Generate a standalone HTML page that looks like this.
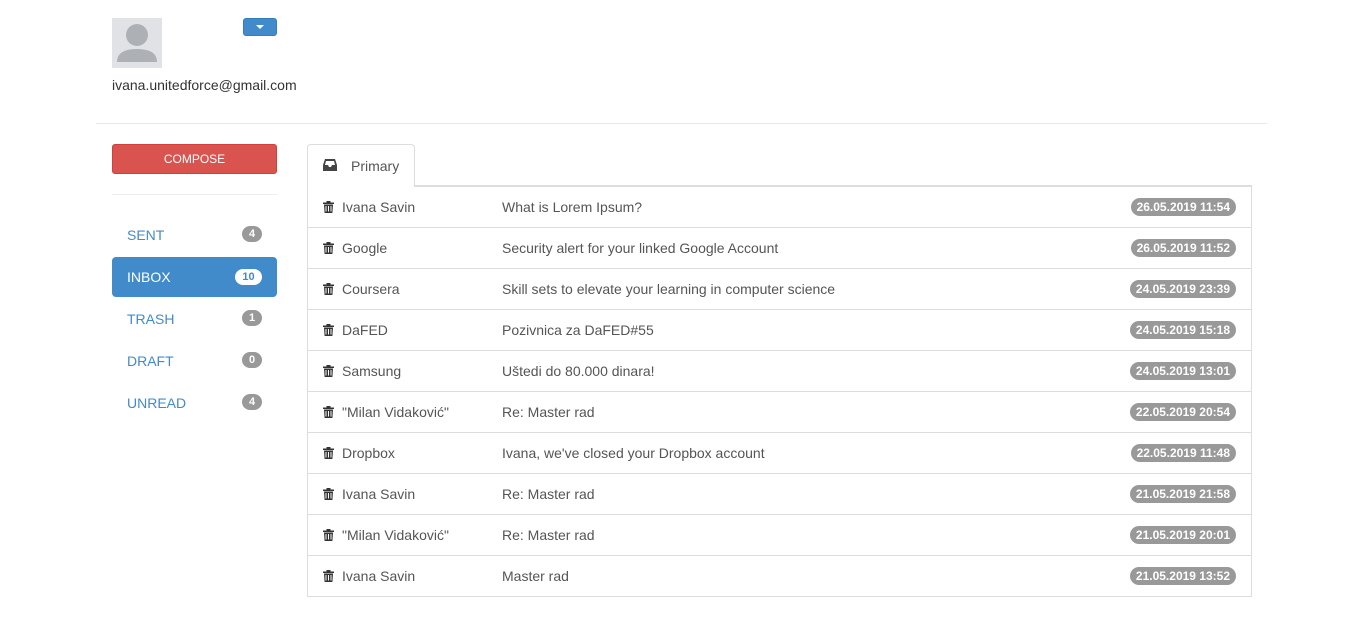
<!DOCTYPE html>
<html><head><meta charset="utf-8"><style>
*{box-sizing:border-box;margin:0;padding:0}
body{width:1363px;height:621px;background:#fff;font-family:"Liberation Sans",sans-serif;font-size:14px;color:#333;position:relative;overflow:hidden}
.abs{position:absolute}
.avatar{left:112px;top:18px;width:50px;height:50px;background:#e0e2e5;overflow:hidden}
.dd{left:243px;top:18px;width:34px;height:18px;background:#428bca;border:1px solid #357ebd;border-radius:3px}
.dd:after{content:"";position:absolute;left:12px;top:6px;border-left:4px solid transparent;border-right:4px solid transparent;border-top:4px solid #fff}
.hr{left:96px;top:123px;width:1171px;height:1px;background:#e8e8e8}
.compose{left:112px;top:144px;width:165px;height:30px;background:#d9534f;border:1px solid #d43f3a;border-radius:3px;color:#fff;font-size:12px;text-align:center;line-height:28px}
.hr2{left:112px;top:194px;width:165px;height:1px;background:#eee}
.nav{left:112px;width:165px;height:40px;line-height:42px;padding-left:15px;color:#428bca;font-size:14px;border-radius:4px}
.nav .b{position:absolute;right:15px;top:12px;height:16px;min-width:20px;padding:0 6px;border-radius:8px;background:#999;color:#fff;font-size:11px;font-weight:bold;line-height:16px;text-align:center}
.nav.act{background:#428bca;color:#fff;line-height:40px}
.nav.act .b{background:#fff;color:#428bca;min-width:27px}
.tab{left:307px;top:144px;width:108px;height:43px;border:1px solid #ddd;border-bottom:none;border-radius:4px 4px 0 0;background:#fff;padding:13px 0 0 43px;color:#555;z-index:2}
.tabline{left:307px;top:185px;width:945px;height:2px;background:#ddd}
.tbl{left:307px;top:186px;width:945px;border:1px solid #ddd;border-top:none}
.row{height:41px;border-top:1px solid #ddd;position:relative;color:#555}
.row:first-child{border-top:none}
.row span{position:absolute;top:12px}
.n{left:34px}.s{left:194px}
.t{left:15px;top:13px!important}
.d{right:15px;top:11px!important;background:#999;color:#fff;font-size:12px;font-weight:bold;border-radius:9px;padding:2px 6px;line-height:14px}
</style></head><body>
<div class="abs avatar"><svg width="50" height="50"><circle cx="25" cy="17" r="11" fill="#adb1b6"/><path d="M5 44 Q5 31 25 31 Q45 31 45 44Z" fill="#adb1b6"/></svg></div>
<div class="abs dd"></div>
<div class="abs" style="left:112px;top:77px">ivana.unitedforce@gmail.com</div>
<div class="abs hr"></div>
<div class="abs compose">COMPOSE</div>
<div class="abs hr2"></div>
<div class="abs nav" style="top:214px">SENT<span class="b">4</span></div>
<div class="abs nav act" style="top:257px">INBOX<span class="b">10</span></div>
<div class="abs nav" style="top:298px">TRASH<span class="b">1</span></div>
<div class="abs nav" style="top:340px">DRAFT<span class="b">0</span></div>
<div class="abs nav" style="top:382px">UNREAD<span class="b">4</span></div>
<div class="abs tab"><svg class="abs" style="left:15px;top:14px" width="14" height="12" viewBox="0 0 14 12"><path d="M2 0h10l2 6v6H0V6z" fill="#444"/><path d="M3 2h8l1 4H9l-1 2H6L5 6H2z" fill="#fff"/></svg>Primary</div>
<div class="abs tabline"></div>
<div class="abs tbl">
<script>
var r=[["Ivana Savin","What is Lorem Ipsum?","26.05.2019 11:54"],["Google","Security alert for your linked Google Account","26.05.2019 11:52"],["Coursera","Skill sets to elevate your learning in computer science","24.05.2019 23:39"],["DaFED","Pozivnica za DaFED#55","24.05.2019 15:18"],["Samsung","Uštedi do 80.000 dinara!","24.05.2019 13:01"],["\"Milan Vidaković\"","Re: Master rad","22.05.2019 20:54"],["Dropbox","Ivana, we've closed your Dropbox account","22.05.2019 11:48"],["Ivana Savin","Re: Master rad","21.05.2019 21:58"],["\"Milan Vidaković\"","Re: Master rad","21.05.2019 20:01"],["Ivana Savin","Master rad","21.05.2019 13:52"]];
var ic='<svg width="11" height="12" viewBox="0 0 11 12"><path d="M0 1.5h11v1.5H0zM3.5 0h4v1.5h-4zM1 3.5h9l-.6 8.5H1.6z" fill="#333"/><path d="M3 5v5.5M5.5 5v5.5M8 5v5.5" stroke="#fff" stroke-width="1"/></svg>';
r.forEach(function(x){document.write('<div class="row"><span class="t">'+ic+'</span><span class="n">'+x[0]+'</span><span class="s">'+x[1]+'</span><span class="d">'+x[2]+'</span></div>')});
</script>
</div>
</body></html>
